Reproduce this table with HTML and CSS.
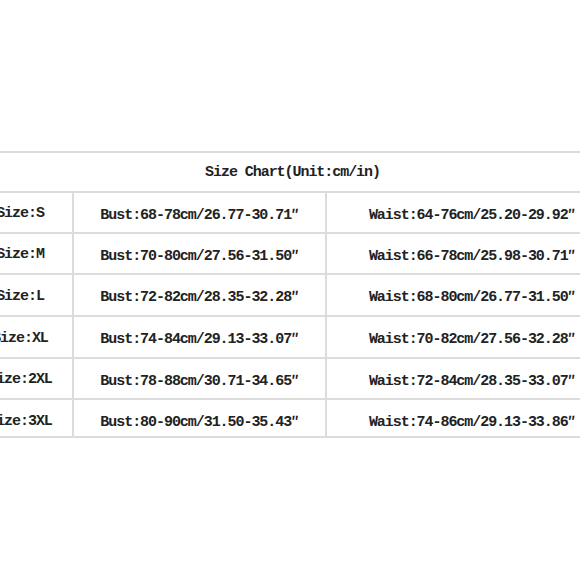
FILE: index.html
```html
<!DOCTYPE html>
<html>
<head>
<meta charset="utf-8">
<link rel="stylesheet" href="styles.css">
</head>
<body>
<div class="page">
  <table class="chart">
    <colgroup>
      <col class="c1"><col class="c2"><col class="c3">
    </colgroup>
    <tr class="head"><td colspan="3">Size Chart(Unit:cm/in)</td></tr>
    <tr class="r41"><td>Size:S</td><td>Bust:68-78cm/26.77-30.71<span class="dq">″</span></td><td>Waist:64-76cm/25.20-29.92<span class="dq">″</span></td></tr>
    <tr class="r41"><td>Size:M</td><td>Bust:70-80cm/27.56-31.50<span class="dq">″</span></td><td>Waist:66-78cm/25.98-30.71<span class="dq">″</span></td></tr>
    <tr class="r42"><td>Size:L</td><td>Bust:72-82cm/28.35-32.28<span class="dq">″</span></td><td>Waist:68-80cm/26.77-31.50<span class="dq">″</span></td></tr>
    <tr class="r42"><td>Size:XL</td><td>Bust:74-84cm/29.13-33.07<span class="dq">″</span></td><td>Waist:70-82cm/27.56-32.28<span class="dq">″</span></td></tr>
    <tr class="r41"><td>Size:2XL</td><td>Bust:78-88cm/30.71-34.65<span class="dq">″</span></td><td>Waist:72-84cm/28.35-33.07<span class="dq">″</span></td></tr>
    <tr class="r38"><td>Size:3XL</td><td>Bust:80-90cm/31.50-35.43<span class="dq">″</span></td><td>Waist:74-86cm/29.13-33.86<span class="dq">″</span></td></tr>
  </table>
</div>
</body>
</html>
```
FILE: styles.css
```css
html, body {
  margin: 0;
  padding: 0;
  background: #ffffff;
  overflow: hidden;
}
.page {
  width: 580px;
  height: 580px;
  overflow: hidden;
  padding-top: 151px;
  box-sizing: border-box;
}
.chart {
  margin-left: -34px;
  width: 651px;
  border-collapse: collapse;
  table-layout: fixed;
  font-family: "Liberation Mono", "DejaVu Sans Mono", monospace;
  font-weight: bold;
  font-size: 15px;
  letter-spacing: -1.05px;
  color: #222222;
}
.c1 { width: 106px; }
.c2 { width: 253px; }
.c3 { width: 292px; }
.chart td {
  border: 2px solid #dcdcdc;
  text-align: center;
  vertical-align: middle;
  padding: 2px 0 0 0;
  white-space: nowrap;
  overflow: hidden;
}
.dq {
  font-family: "Noto Sans CJK SC", "DejaVu Sans", sans-serif;
  font-weight: bold;
  letter-spacing: 0;
  font-size: 13px;
}
.head td { height: 40px; padding-top: 0; box-sizing: border-box; }
.r41 td { height: 41px; box-sizing: border-box; }
.r42 td { height: 42px; box-sizing: border-box; }
.r38 td { height: 38px; box-sizing: border-box; padding-top: 6px; }
```
